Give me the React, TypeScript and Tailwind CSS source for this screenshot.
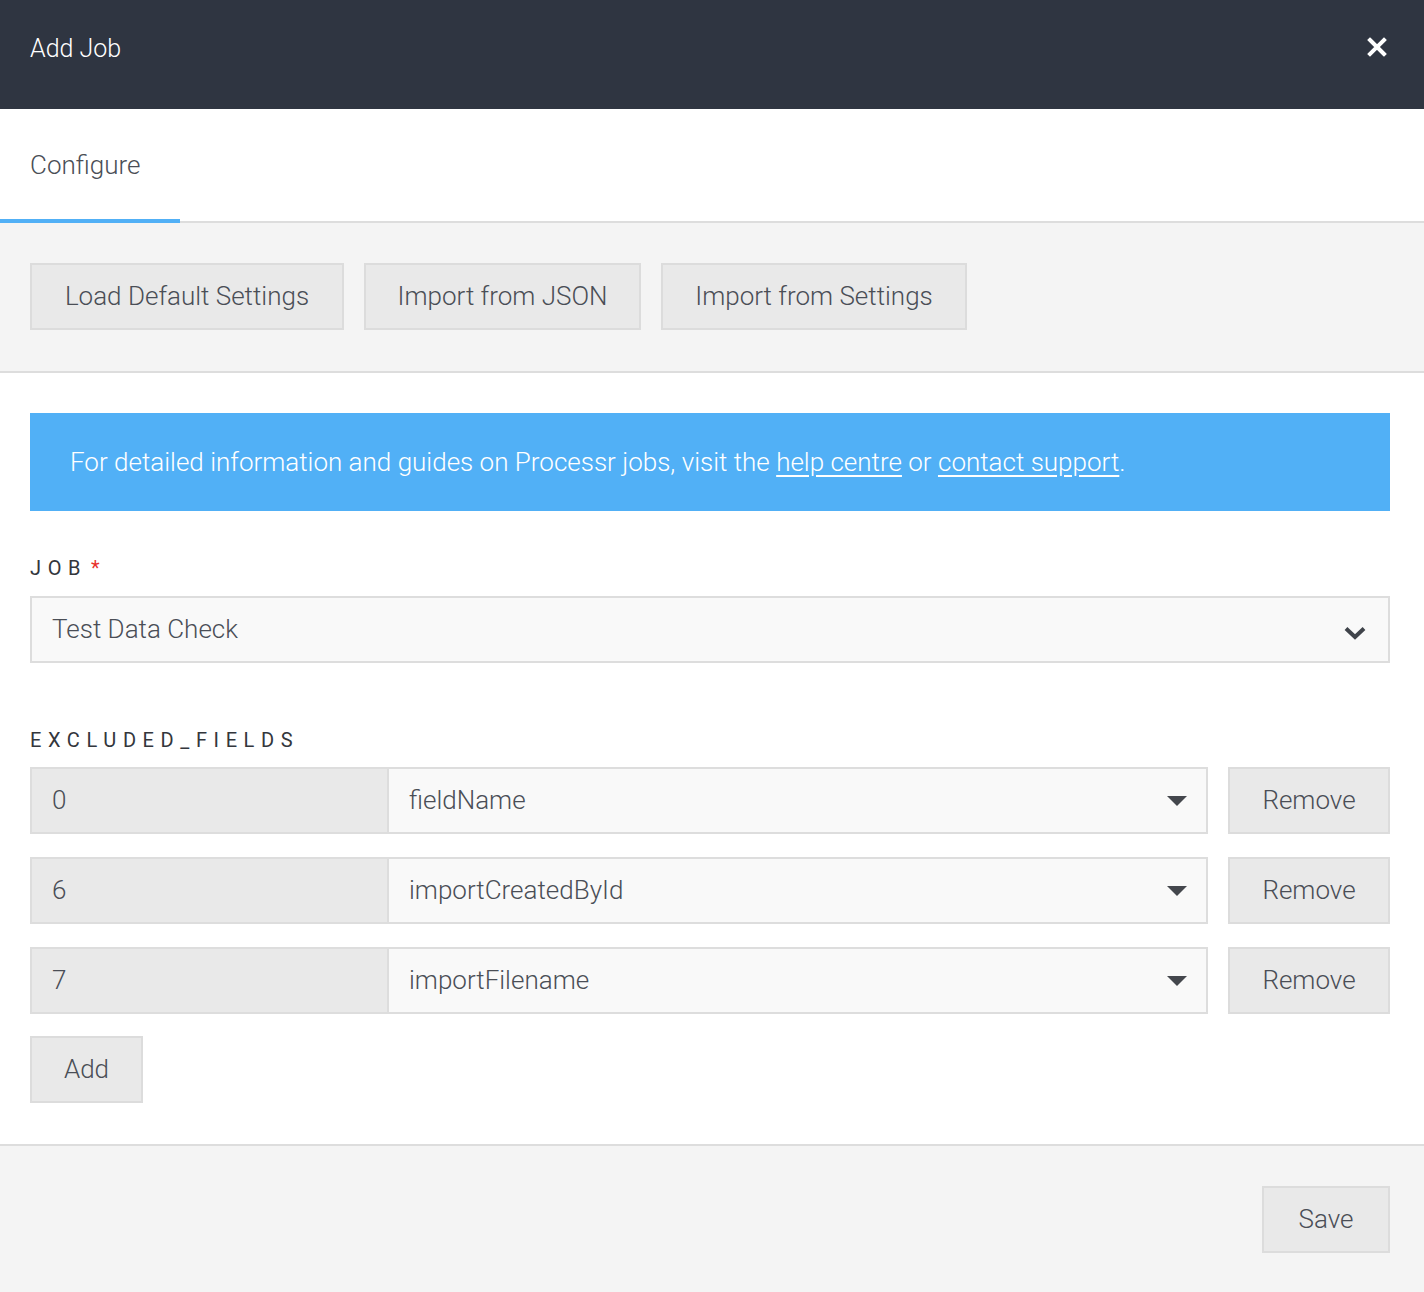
const font = { fontFamily: "Roboto, 'Noto Sans', sans-serif" };

function GrayButton({ label, className = "" }: { label: string; className?: string }) {
  return (
    <button
      className={`h-[67px] border-2 border-[#dcdcdc] bg-[#e9e9e9] text-[26px] text-[#4a4e56] font-light ${className}`}
    >
      {label}
    </button>
  );
}

function Caret() {
  return (
    <svg width="20" height="10" viewBox="0 0 20 10" className="shrink-0">
      <path d="M0 0h20L10 10z" fill="#44474d" />
    </svg>
  );
}

function Chevron() {
  return (
    <svg width="22" height="16" viewBox="0 0 22 16" className="shrink-0">
      <path d="M2 4.5l9 8.5 9-8.5" fill="none" stroke="#3f434a" strokeWidth="4" strokeLinejoin="miter" />
    </svg>
  );
}

function CloseIcon() {
  return (
    <svg width="22" height="22" viewBox="0 0 22 22" className="-mt-[4px]">
      <path d="M4 4l14 14M18 4L4 18" stroke="#ffffff" strokeWidth="4" strokeLinecap="square" />
    </svg>
  );
}

const fields = [
  { index: "0", name: "fieldName" },
  { index: "6", name: "importCreatedById" },
  { index: "7", name: "importFilename" },
];

export default function App() {
  return (
    <div className="w-[1424px] min-h-[1292px] bg-white flex flex-col text-[#4a4e56]" style={font}>
      <div className="h-[109px] bg-[#2f3541] flex items-center justify-between pl-[30px] pr-[36px] pb-[12px]">
        <h1 className="text-[25px] text-white font-light">Add Job</h1>
        <CloseIcon />
      </div>

      <div className="relative h-[114px] border-b-2 border-[#dddddd] flex">
        <div className="relative w-[180px] flex items-center pl-[30px]">
          <span className="text-[26px] font-light text-[#4a4e56]">Configure</span>
          <div className="absolute left-0 right-0 -bottom-[2px] h-[4px] bg-[#51b0f6]" />
        </div>
      </div>

      <div className="h-[150px] bg-[#f4f4f4] border-b-2 border-[#dddddd] flex items-start gap-[20px] px-[30px] pt-[40px]">
        <GrayButton label="Load Default Settings" className="w-[314px]" />
        <GrayButton label="Import from JSON" className="w-[277px]" />
        <GrayButton label="Import from Settings" className="w-[306px]" />
      </div>

      <div className="flex flex-col pl-[30px] pr-[34px] pt-[40px] pb-[41px]">
        <div className="h-[98px] bg-[#51b0f6] flex items-center pl-[40px] text-white text-[26px] font-light">
          <p>
            For detailed information and guides on Processr jobs, visit the{" "}
            <a className="underline underline-offset-[4px]">help centre</a> or{" "}
            <a className="underline underline-offset-[4px]">contact support</a>.
          </p>
        </div>

        <label className="mt-[47px] text-[20px] font-normal tracking-[0.33em] uppercase text-[#33363c] leading-none">
          Job<span className="text-[#e8322b] ml-[4px]">*</span>
        </label>
        <div className="mt-[18px] h-[67px] bg-[#f9f9f9] border-2 border-[#dddddd] flex items-center justify-between pl-[20px] pr-[22px]">
          <span className="text-[26px] font-light">Test Data Check</span>
          <div className="mt-[4px]">
            <Chevron />
          </div>
        </div>

        <label className="mt-[67px] text-[20px] font-normal tracking-[0.33em] uppercase text-[#33363c] leading-none">
          excluded_fields
        </label>
        <div className="mt-[17px] flex flex-col gap-[23px]">
          {fields.map((f) => (
            <div key={f.index} className="flex gap-[20px]">
              <div className="flex-1 flex h-[67px] border-2 border-[#dddddd]">
                <div className="w-[357px] bg-[#e9e9e9] flex items-center pl-[20px] border-r-2 border-[#dddddd] text-[26px] font-light">
                  {f.index}
                </div>
                <div className="flex-1 bg-[#f9f9f9] flex items-center justify-between pl-[20px] pr-[19px] text-[26px] font-light">
                  <span>{f.name}</span>
                  <Caret />
                </div>
              </div>
              <GrayButton label="Remove" className="w-[162px]" />
            </div>
          ))}
        </div>
        <div className="mt-[22px]">
          <GrayButton label="Add" className="w-[113px]" />
        </div>
      </div>

      <div className="flex-1 bg-[#f4f4f4] border-t-2 border-[#dddddd] flex justify-end items-start px-[34px] pt-[40px]">
        <GrayButton label="Save" className="w-[128px]" />
      </div>
    </div>
  );
}
